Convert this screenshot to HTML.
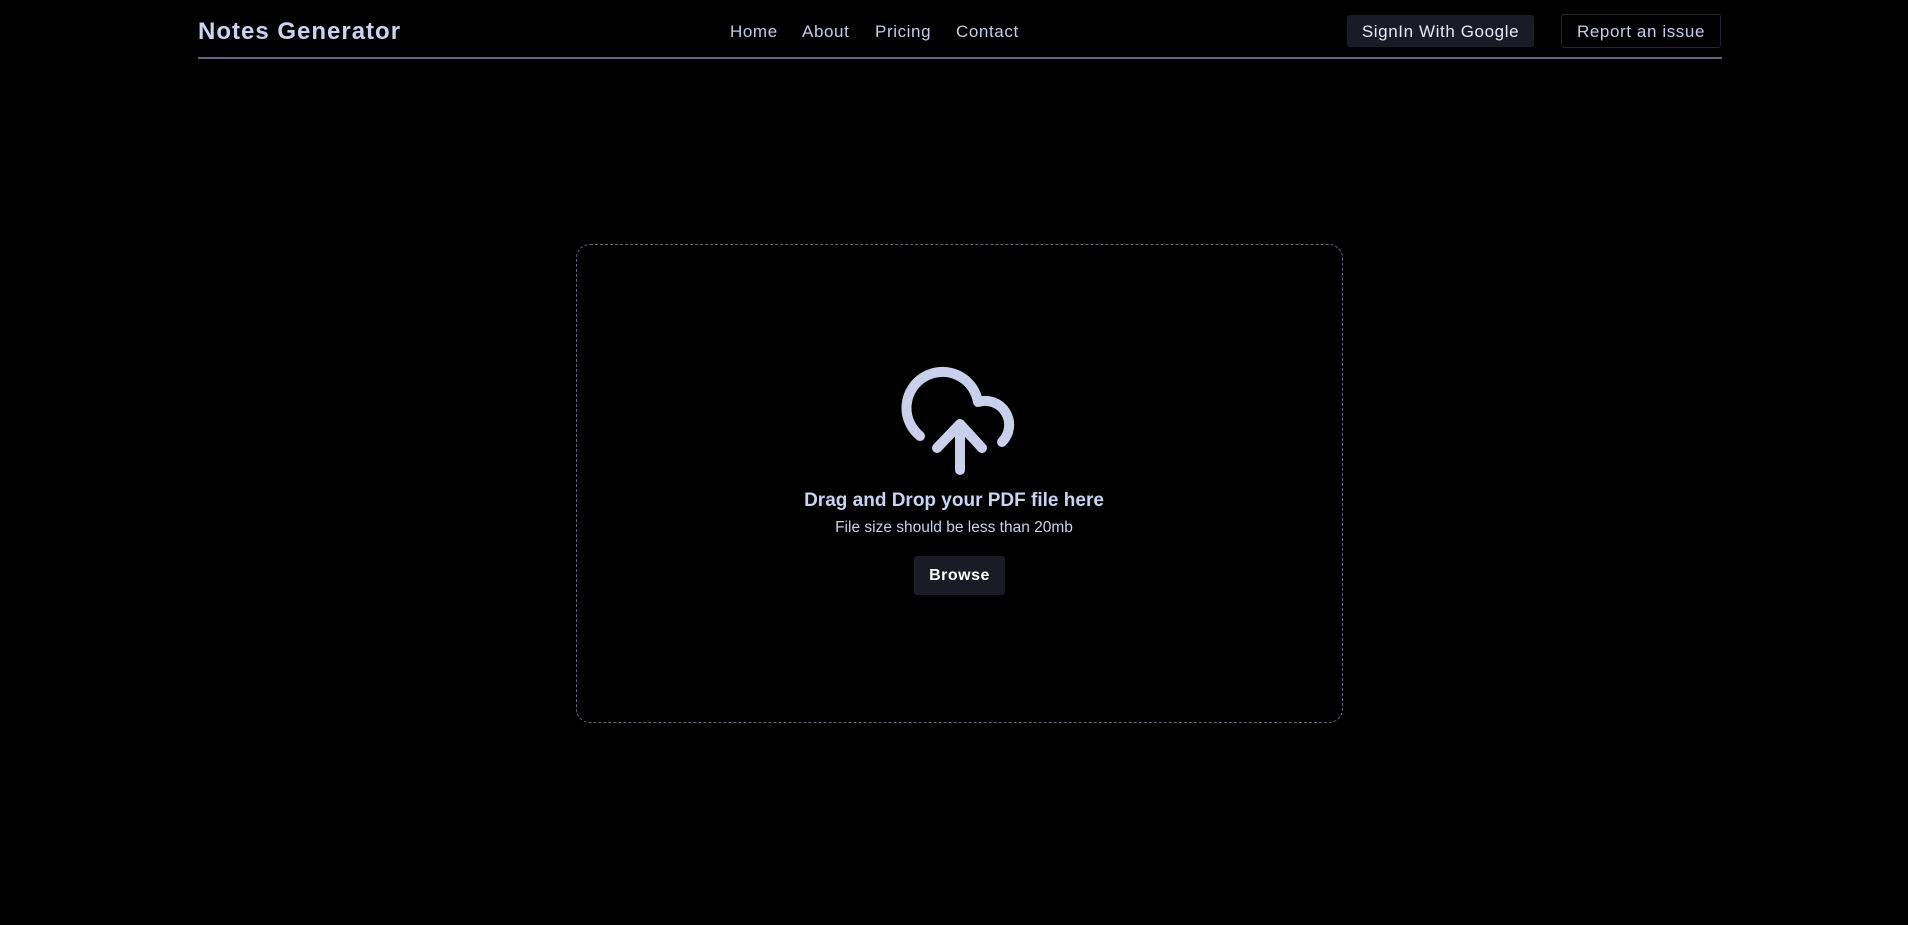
<!DOCTYPE html>
<html><head><meta charset="utf-8"><style>
*{margin:0;padding:0;box-sizing:border-box}
body{width:1908px;height:925px;background:#000;font-family:"Liberation Sans",sans-serif;color:#c9d1ee;position:relative;overflow:hidden}
.abs{position:absolute}
.logo{left:198px;top:18px;font-size:24px;font-weight:bold;letter-spacing:1px;color:#c9d3f2}
.nav{top:22px;font-size:17px;letter-spacing:0.6px;color:#c3cbea}
.line{left:198px;top:57px;width:1524px;height:2px;background:#5f6582}
.btn1{left:1347px;top:15px;width:187px;height:32px;background:#1a1b27;border-radius:3px;color:#e6eaf8;font-size:17px;letter-spacing:0.6px;text-align:center;line-height:33px}
.btn2{left:1561px;top:14px;width:160px;height:34px;border:1px solid #24252f;border-radius:3px;color:#c3cbea;font-size:17px;letter-spacing:0.6px;text-align:center;line-height:33px}
.drop{left:576px;top:244px;width:767px;height:479px;border:1px dashed #5f6582;border-radius:14px}
.t{width:1908px;left:0;text-align:center}
.browse{left:914px;top:556px;width:91px;height:39px;background:#1a1b27;border-radius:3px;color:#fff;font-weight:bold;font-size:16px;letter-spacing:0.5px;text-align:center;line-height:39px}
</style></head><body>
<div class="abs logo">Notes Generator</div>
<div class="abs nav" style="left:730px">Home</div>
<div class="abs nav" style="left:802px">About</div>
<div class="abs nav" style="left:875px">Pricing</div>
<div class="abs nav" style="left:956px">Contact</div>
<div class="abs btn1">SignIn With Google</div>
<div class="abs btn2">Report an issue</div>
<div class="abs line"></div>
<div class="abs drop"></div>
<svg class="abs" style="left:890px;top:360px" width="140" height="120" viewBox="0 0 140 120" fill="none" stroke="#c8d0ec" stroke-width="10" stroke-linecap="round" stroke-linejoin="round">
<path d="M30 76 A36 36 0 1 1 88 42 A24 24 0 0 1 112 82"/>
<path d="M70 65 V110 M47 88 L70 64 L92 88"/>
</svg>
<div class="abs t" style="top:490px;font-size:19px;font-weight:bold;color:#c9d3f2">Drag and Drop your PDF file here</div>
<div class="abs t" style="top:519px;font-size:15.5px;color:#c9d1ee">File size should be less than 20mb</div>
<div class="abs browse">Browse</div>
</body></html>
